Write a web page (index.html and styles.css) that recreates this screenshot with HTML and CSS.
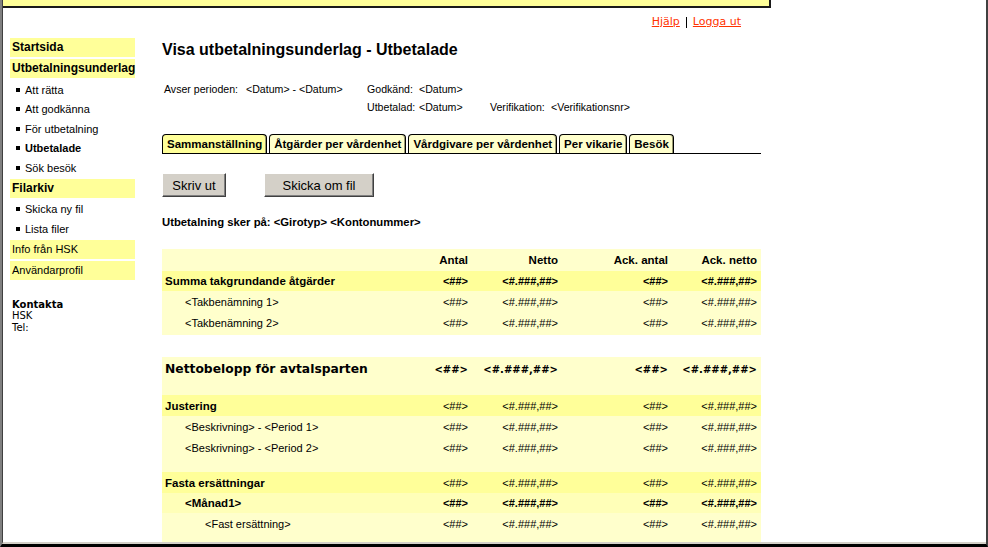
FILE: index.html
```html
<!DOCTYPE html>
<html lang="sv">
<head>
<meta charset="utf-8">
<title>Visa utbetalningsunderlag - Utbetalade</title>
<link rel="stylesheet" href="styles.css">
</head>
<body>
<div class="window">
  <div class="viewport">
    <div class="topbar"></div>
    <div class="toplinks">
      <a href="#">Hjälp</a><span class="sep"></span><a href="#">Logga ut</a>
    </div>
    <div class="layout">
      <nav class="sidebar">
        <a class="bar bold" href="#">Startsida</a>
        <a class="bar bold" href="#">Utbetalningsunderlag</a>
        <ul class="sub">
          <li><a href="#">Att rätta</a></li>
          <li><a href="#">Att godkänna</a></li>
          <li><a href="#">För utbetalning</a></li>
          <li class="current"><a href="#">Utbetalade</a></li>
          <li><a href="#">Sök besök</a></li>
        </ul>
        <a class="bar bold" href="#">Filarkiv</a>
        <ul class="sub">
          <li><a href="#">Skicka ny fil</a></li>
          <li><a href="#">Lista filer</a></li>
        </ul>
        <a class="bar" href="#">Info från HSK</a>
        <a class="bar" href="#">Användarprofil</a>
        <div class="contact">
          <div class="contact-title">Kontakta</div>
          <div>HSK</div>
          <div>Tel:</div>
        </div>
      </nav>
      <main class="content">
        <h1 class="title">Visa utbetalningsunderlag - Utbetalade</h1>
        <div class="info">
          <span>Avser perioden:</span><span>&lt;Datum&gt; - &lt;Datum&gt;</span><span>Godkänd:</span><span>&lt;Datum&gt;</span><span></span><span></span>
          <span></span><span></span><span>Utbetalad:</span><span>&lt;Datum&gt;</span><span>Verifikation:</span><span>&lt;Verifikationsnr&gt;</span>
        </div>
        <div class="tabs">
          <span class="tab active">Sammanställning</span>
          <span class="tab">Åtgärder per vårdenhet</span>
          <span class="tab">Vårdgivare per vårdenhet</span>
          <span class="tab">Per vikarie</span>
          <span class="tab">Besök</span>
        </div>
        <div class="actions">
          <button class="btn btn-print" type="button">Skriv ut</button>
          <button class="btn btn-resend" type="button">Skicka om fil</button>
        </div>
        <p class="payline">Utbetalning sker på: &lt;Girotyp&gt; &lt;Kontonummer&gt;</p>

        <table class="grid grid-first">
          <colgroup><col class="c-label"><col class="c-a"><col class="c-b"><col class="c-c"><col class="c-d"></colgroup>
          <tr class="row-light head">
            <td></td><td class="num">Antal</td><td class="num">Netto</td><td class="num">Ack. antal</td><td class="num">Ack. netto</td>
          </tr>
          <tr class="row-strong sum">
            <td class="lbl">Summa takgrundande åtgärder</td><td class="num">&lt;##&gt;</td><td class="num">&lt;#.###,##&gt;</td><td class="num">&lt;##&gt;</td><td class="num">&lt;#.###,##&gt;</td>
          </tr>
          <tr class="row-light">
            <td class="lbl l1">&lt;Takbenämning 1&gt;</td><td class="num">&lt;##&gt;</td><td class="num">&lt;#.###,##&gt;</td><td class="num">&lt;##&gt;</td><td class="num">&lt;#.###,##&gt;</td>
          </tr>
          <tr class="row-light">
            <td class="lbl l1">&lt;Takbenämning 2&gt;</td><td class="num">&lt;##&gt;</td><td class="num">&lt;#.###,##&gt;</td><td class="num">&lt;##&gt;</td><td class="num">&lt;#.###,##&gt;</td>
          </tr>
          <tr class="row-light pad2"><td colspan="5"></td></tr>
        </table>

        <table class="grid grid-second">
          <colgroup><col class="c-label"><col class="c-a"><col class="c-b"><col class="c-c"><col class="c-d"></colgroup>
          <tr class="row-light net">
            <td class="lbl">Nettobelopp för avtalsparten</td><td class="num">&lt;##&gt;</td><td class="num">&lt;#.###,##&gt;</td><td class="num">&lt;##&gt;</td><td class="num">&lt;#.###,##&gt;</td>
          </tr>
          <tr class="row-light spacer"><td colspan="5"></td></tr>
          <tr class="row-strong bold">
            <td class="lbl">Justering</td><td class="num">&lt;##&gt;</td><td class="num">&lt;#.###,##&gt;</td><td class="num">&lt;##&gt;</td><td class="num">&lt;#.###,##&gt;</td>
          </tr>
          <tr class="row-light">
            <td class="lbl l1">&lt;Beskrivning&gt; - &lt;Period 1&gt;</td><td class="num">&lt;##&gt;</td><td class="num">&lt;#.###,##&gt;</td><td class="num">&lt;##&gt;</td><td class="num">&lt;#.###,##&gt;</td>
          </tr>
          <tr class="row-light">
            <td class="lbl l1">&lt;Beskrivning&gt; - &lt;Period 2&gt;</td><td class="num">&lt;##&gt;</td><td class="num">&lt;#.###,##&gt;</td><td class="num">&lt;##&gt;</td><td class="num">&lt;#.###,##&gt;</td>
          </tr>
          <tr class="row-light spacer"><td colspan="5"></td></tr>
          <tr class="row-strong bold">
            <td class="lbl">Fasta ersättningar</td><td class="num">&lt;##&gt;</td><td class="num">&lt;#.###,##&gt;</td><td class="num">&lt;##&gt;</td><td class="num">&lt;#.###,##&gt;</td>
          </tr>
          <tr class="row-mid sum">
            <td class="lbl l1">&lt;Månad1&gt;</td><td class="num">&lt;##&gt;</td><td class="num">&lt;#.###,##&gt;</td><td class="num">&lt;##&gt;</td><td class="num">&lt;#.###,##&gt;</td>
          </tr>
          <tr class="row-light">
            <td class="lbl l2">&lt;Fast ersättning&gt;</td><td class="num">&lt;##&gt;</td><td class="num">&lt;#.###,##&gt;</td><td class="num">&lt;##&gt;</td><td class="num">&lt;#.###,##&gt;</td>
          </tr>
          <tr class="row-light spacer"><td colspan="5"></td></tr>
        </table>
      </main>
    </div>
  </div>
</div>
</body>
</html>
```

FILE: styles.css
```css
html, body {
  margin: 0;
  padding: 0;
  background: #fff;
}

body {
  font-family: "Liberation Sans", Arial, sans-serif;
  font-size: 11px;
  color: #000;
}

.window {
  width: 988px;
  height: 547px;
  box-sizing: border-box;
  border-left: 2px solid #808080;
  border-right: 2px solid #404040;
  border-bottom: 3px solid #000;
  overflow: hidden;
}

.viewport {
  height: 544px;
  box-sizing: border-box;
  border-left: 1px solid #404040;
  border-bottom: 2px solid #d4d0c8;
  overflow: hidden;
}

.topbar {
  width: 766px;
  height: 6px;
  background: #ffff99;
  border-right: 2px solid #1a1a1a;
  border-bottom: 2px solid #1a1a1a;
}

.toplinks {
  width: 738px;
  height: 14px;
  margin-top: 7px;
  display: flex;
  justify-content: flex-end;
  align-items: center;
  font-family: "DejaVu Sans", Verdana, sans-serif;
  font-size: 11px;
  line-height: 14px;
}

.toplinks a {
  color: #ff3300;
  text-decoration: underline;
}

.toplinks .sep {
  display: inline-block;
  width: 1px;
  height: 11px;
  background: #000;
  margin: 0 6px;
}

.layout {
  display: flex;
  margin-top: 9px;
}

.sidebar {
  width: 125px;
  margin-left: 7px;
  flex: none;
}

.bar {
  display: block;
  height: 19px;
  line-height: 19px;
  padding-left: 2px;
  margin-bottom: 2px;
  background: #ffff99;
  color: #000;
  text-decoration: none;
  font-size: 11px;
}

.bar.bold {
  font-weight: bold;
  font-size: 12px;
}

.sub {
  list-style: none;
  margin: 0 0 1px;
  padding: 0;
}

.sub li {
  height: 19.5px;
  display: flex;
  align-items: center;
  padding-left: 6px;
  font-size: 11px;
}

.sub li::before {
  content: "";
  width: 4px;
  height: 4px;
  background: #000;
  margin-right: 5px;
  flex: none;
}

.sub a {
  color: #000;
  text-decoration: none;
}

.sub li.current a {
  font-weight: bold;
}

.contact {
  margin-top: 19px;
  padding-left: 2px;
  font-family: "DejaVu Sans", Verdana, sans-serif;
  font-size: 10px;
  line-height: 11.5px;
}

.contact-title {
  font-weight: bold;
}

.content {
  width: 599px;
  margin-left: 27px;
  flex: none;
}

.title {
  margin: 2px 0 0;
  font-size: 16px;
  font-weight: bold;
  line-height: 20px;
}

.info {
  display: grid;
  grid-template-columns: 82px 121px 52px 71px 61px auto;
  grid-auto-rows: 18px;
  align-items: center;
  margin-top: 20px;
  padding-left: 2px;
  font-size: 10.6px;
  line-height: 18px;
  white-space: nowrap;
}

.tabs {
  display: flex;
  align-items: flex-end;
  gap: 2px;
  height: 19px;
  margin-top: 18px;
  border-bottom: 1px solid #000;
}

.tab {
  height: 18px;
  line-height: 18px;
  padding: 0 4px;
  border: 1px solid #000;
  border-bottom: 0;
  border-radius: 4px 4px 0 0;
  background: #ffffcc;
  box-shadow: inset -1px 0 #9a9a70;
  font-size: 11.5px;
  font-weight: bold;
  white-space: nowrap;
}

.tab.active {
  background: #ffff99;
}

.actions {
  display: flex;
  gap: 38px;
  margin-top: 19px;
}

.btn {
  height: 24px;
  padding: 0;
  margin: 0;
  font-family: "Liberation Sans", Arial, sans-serif;
  font-size: 13px;
  color: #000;
  background: #d4d0c8;
  border: 1px solid;
  border-color: #ffffff #404040 #404040 #ffffff;
  box-shadow: inset -1px -1px #808080;
  border-radius: 0;
}

.btn-print {
  width: 64px;
}

.btn-resend {
  width: 110px;
}

.payline {
  margin: 18px 0 0;
  font-size: 11.3px;
  font-weight: bold;
  line-height: 14px;
}

.grid {
  width: 599px;
  table-layout: fixed;
  border-collapse: collapse;
  border-spacing: 0;
}

.grid-first {
  margin-top: 20px;
}

.grid-second {
  margin-top: 22px;
}

.c-label { width: 220px; }
.c-a { width: 90px; }
.c-b { width: 90px; }
.c-c { width: 110px; }
.c-d { width: 89px; }

.grid td {
  height: 21px;
  padding: 0 4px 0 3px;
  font-size: 11px;
  white-space: nowrap;
}

.grid td.num {
  text-align: right;
}

.grid td.l1 {
  padding-left: 23px;
}

.grid td.l2 {
  padding-left: 43px;
}

.row-light td { background: #ffffcc; }
.row-strong td { background: #ffff99; }
.row-mid td { background: #ffffb8; }

.grid .head td {
  height: 22px;
  font-size: 11.5px;
  font-weight: bold;
}

.grid .sum td {
  height: 20px;
  font-weight: bold;
}

.grid .sum td.lbl,
.grid .bold td.lbl {
  font-size: 11.5px;
  font-weight: bold;
}

.grid .pad2 td {
  height: 2px;
  padding: 0;
}

.grid .spacer td {
  height: 14px;
  padding: 0;
}

.grid .net td {
  height: 24px;
  font-family: "DejaVu Sans", Verdana, sans-serif;
  font-size: 10px;
  font-weight: bold;
}

.grid .net td.lbl {
  font-size: 12.3px;
}
```
